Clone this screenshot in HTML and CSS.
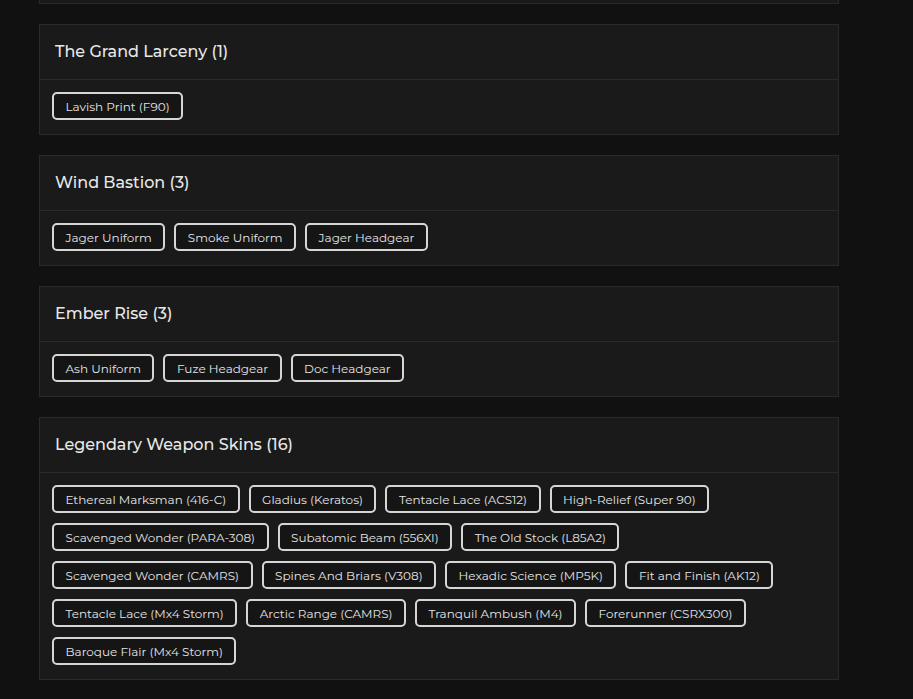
FILE: index.html
```html
<!DOCTYPE html>
<html>
<head>
<meta charset="utf-8">
<link rel="stylesheet" href="styles.css">
</head>
<body>
<div class="page">
  <div class="card card-tail"></div>

  <section class="card">
    <header class="card-header"><h2 class="card-title">The Grand Larceny (1)</h2></header>
    <div class="card-body">
      <span class="badge">Lavish Print (F90)</span>
    </div>
  </section>

  <section class="card">
    <header class="card-header"><h2 class="card-title">Wind Bastion (3)</h2></header>
    <div class="card-body">
      <span class="badge">Jager Uniform</span>
      <span class="badge">Smoke Uniform</span>
      <span class="badge">Jager Headgear</span>
    </div>
  </section>

  <section class="card">
    <header class="card-header"><h2 class="card-title">Ember Rise (3)</h2></header>
    <div class="card-body">
      <span class="badge">Ash Uniform</span>
      <span class="badge">Fuze Headgear</span>
      <span class="badge">Doc Headgear</span>
    </div>
  </section>

  <section class="card">
    <header class="card-header"><h2 class="card-title">Legendary Weapon Skins (16)</h2></header>
    <div class="card-body">
      <span class="badge">Ethereal Marksman (416-C)</span>
      <span class="badge">Gladius (Keratos)</span>
      <span class="badge">Tentacle Lace (ACS12)</span>
      <span class="badge">High-Relief (Super 90)</span>
      <span class="badge">Scavenged Wonder (PARA-308)</span>
      <span class="badge">Subatomic Beam (556XI)</span>
      <span class="badge">The Old Stock (L85A2)</span>
      <span class="badge">Scavenged Wonder (CAMRS)</span>
      <span class="badge">Spines And Briars (V308)</span>
      <span class="badge">Hexadic Science (MP5K)</span>
      <span class="badge">Fit and Finish (AK12)</span>
      <span class="badge">Tentacle Lace (Mx4 Storm)</span>
      <span class="badge">Arctic Range (CAMRS)</span>
      <span class="badge">Tranquil Ambush (M4)</span>
      <span class="badge">Forerunner (CSRX300)</span>
      <span class="badge">Baroque Flair (Mx4 Storm)</span>
    </div>
  </section>
</div>
</body>
</html>
```

FILE: styles.css
```css
html, body {
  margin: 0;
  padding: 0;
  background: #111111;
  color: #e6e6e6;
  font-family: "Montserrat", "Open Sans", "DejaVu Sans", sans-serif;
}

.page {
  width: 800px;
  margin-left: 39px;
  display: flex;
  flex-direction: column;
  gap: 20px;
}

.card {
  background: #1a1a1a;
  border: 1px solid #2a2a2a;
}

.card-tail {
  border-top: none;
  height: 3px;
}

.card-header {
  padding: 0 15px 1px;
  height: 53px;
  display: flex;
  align-items: center;
  border-bottom: 1px solid #2a2a2a;
}

.card-title {
  margin: 0;
  font-size: 16px;
  font-weight: 500;
  color: #e8e8e8;
}

.card-body {
  padding: 12px 12px 14px;
  display: flex;
  flex-wrap: wrap;
  column-gap: 9px;
  row-gap: 10px;
}

.badge {
  display: inline-flex;
  align-items: center;
  height: 28px;
  box-sizing: border-box;
  padding: 0 11.5px;
  border: 2px solid #d6d6d6;
  border-radius: 5px;
  background: #151515;
  font-size: 12px;
  color: #e4e4e4;
  white-space: nowrap;
}
```
